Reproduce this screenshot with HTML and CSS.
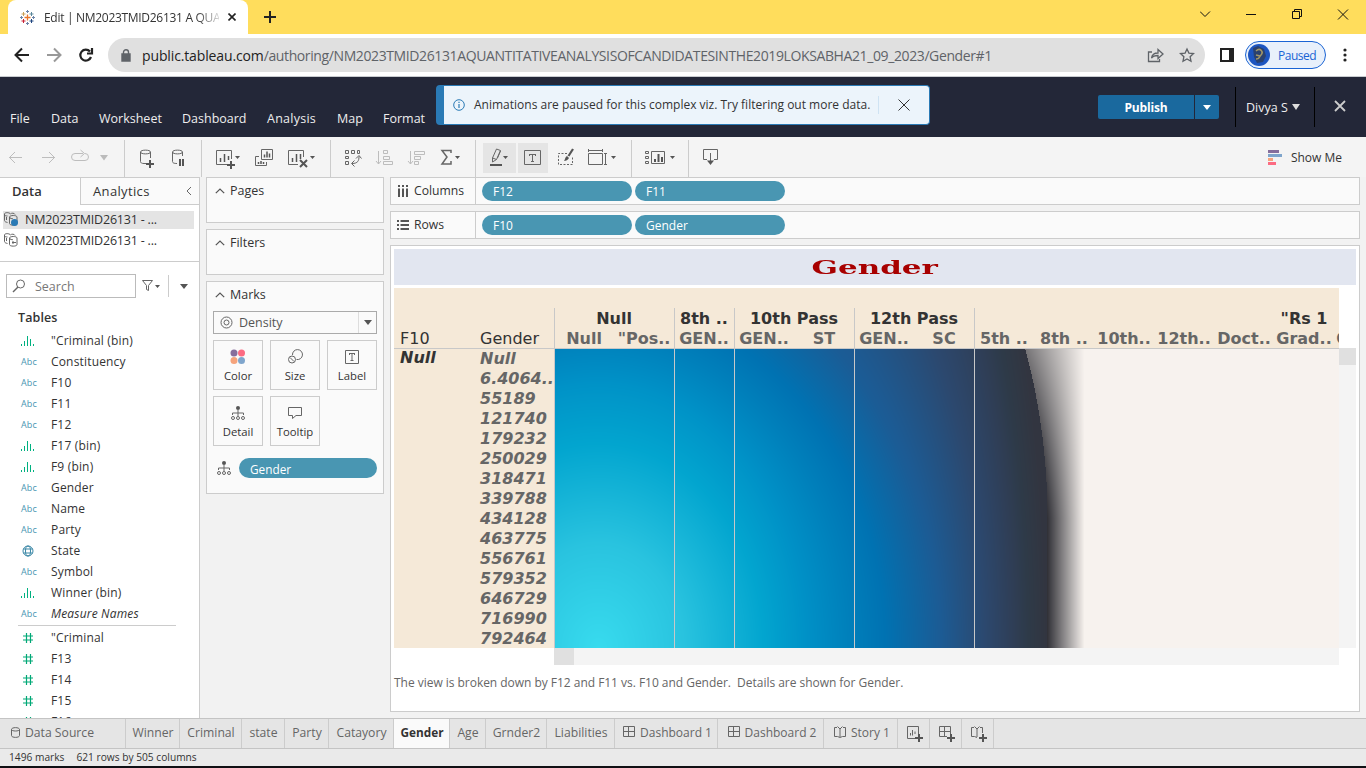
FILE: index.html
```
<!DOCTYPE html>
<html lang="en">
<head>
<meta charset="utf-8">
<title>Edit | NM2023TMID26131 A QUA</title>
<link rel="stylesheet" href="styles.css">
</head>
<body>
<svg width="0" height="0" class="defs">
  <defs>
    <symbol id="bin" viewBox="0 0 14 12"><path d="M.5 9v2M3.500 6v5M6.500 1v10M9.500 4v7M12.500 9v2" stroke="#00b180"/></symbol>
    <symbol id="hash" viewBox="0 0 12 12"><path d="M4.500 1v10M8.500 1v10M1 4h10M1 8h10" stroke="#00a876" stroke-width="1.200"/></symbol>
    <symbol id="globe" viewBox="0 0 12 12"><g fill="none" stroke="#3a87a6"><circle cx="6" cy="6" r="5"/><ellipse cx="6" cy="6" rx="2.500" ry="5"/><path d="M1.500 4h9M1.500 8h9"/></g></symbol>
    <symbol id="caret" viewBox="0 0 10 6"><path d="M.8 5.200L5 1l4.200 4.200" fill="none" stroke="#555" stroke-width="1.200"/></symbol>
    <symbol id="dash" viewBox="0 0 12 12"><path d="M.5.500h11v10H.500zM5.500.500v10M.500 5.500h11" fill="none" stroke="#666"/></symbol>
    <symbol id="book" viewBox="0 0 12 12"><path d="M3 1.500H.500v9h3L6 11.500l2.500-1h3v-9H9M3.500.500L6 3l2.500-2.500M6 3v8" fill="none" stroke="#666"/></symbol>
    <symbol id="detail" viewBox="0 0 14 14"><circle cx="7" cy="2" r="2" fill="#555"/><path d="M7 4v6M1.500 9V7h11v2" stroke="#666" fill="none"/><g fill="none" stroke="#666"><circle cx="2" cy="12" r="1.500"/><circle cx="7" cy="12" r="1.500"/><circle cx="12" cy="12" r="1.500"/></g></symbol>
    <symbol id="source" viewBox="0 0 14 14"><g fill="none" stroke="#666"><path d="M3.500 10.500C1.500 10 .500 9.500.500 8.500V2c0-1.800 5-1.800 6 0 1-1.300 4-1 4.500.500M.500 3c1 1 2 1 3 1M2.500 5v3M5.500 5v6.500c0 2.200 7.500 2.200 7.500 0V5c0-2-7.500-2-7.500 0 0 1.500 3 2 3.500 1.500M8 9.500h4M9 8v3"/></g></symbol>
  </defs>
</svg>
<div class="screen">
  <header class="tabstrip">
    <div class="browser-tab">
      <svg width="15" height="15" viewBox="0 0 15 15"><path d="M7.500 4.500v6M4.500 7.500h6" stroke="#e8762c" stroke-width="1.300"/><path d="M3.500 2v4M1.500 4h4" stroke="#c9a15b"/><path d="M11.500 2v4M9.500 4h4" stroke="#5b879b"/><path d="M3.500 9v4M1.500 11h4" stroke="#c72035"/><path d="M11.500 9v4M9.500 11h4" stroke="#1f457e"/><path d="M7.500 0v3M6 1.500h3M0 7.500h3M1.500 6v3M12 7.500h3M13.500 6v3M7.500 12v3M6 13.500h3" stroke="#6b83a8"/></svg>
      <span class="tab-title">Edit | NM2023TMID26131 A QUA</span>
      <svg class="tab-close" width="8" height="8" viewBox="0 0 8 8"><path d="M.5.500l7 7M7.500.500l-7 7" stroke="#222" stroke-width="1.600"/></svg>
    </div>
    <svg class="new-tab" width="12" height="12" viewBox="0 0 12 12"><path d="M6 0v12M0 6h12" stroke="#222" stroke-width="2"/></svg>
    <svg class="window-controls" width="166" height="34" viewBox="1200 0 166 34"><g fill="none" stroke="#111"><path d="M1200 11.500l5 5 5-5M1246 14.500h10M1292.500 11.500h7v7h-7zM1294.500 11v-1.500h7v7H1300M1338 9.500l10 10M1348 9.500l-10 10"/></g></svg>
  </header>
  <div class="addressbar">
    <svg width="108" height="42" viewBox="0 34 108 42"><g fill="none" stroke-width="2"><path d="M29 55H16M22 48.500L15.500 55l6.500 6.500" stroke="#222"/><path d="M47 55h13M54 48.500l6.500 6.500-6.500 6.500" stroke="#999"/><path d="M90 51.500A5.500 5.500 0 1 0 91 57M92 48v5.500h-5" stroke="#222" stroke-width="2.200"/></g></svg>
    <div class="omnibox">
      <svg width="10" height="13" viewBox="0 0 10 13"><path d="M1 5h8v7H1zM2.500 5V3.300a2.500 2.500 0 0 1 5 0V5" fill="none" stroke="#5f6368" stroke-width="1.400"/><path d="M1 5h8v7H1z" fill="#5f6368"/></svg>
      <span class="url"><b>public.tableau.com</b>/authoring/NM2023TMID26131AQUANTITATIVEANALYSISOFCANDIDATESINTHE2019LOKSABHA21_09_2023/Gender#1</span>
      <svg class="omni-icons" width="60" height="34" viewBox="1145 38 60 34"><path d="M1152 52h-3.500v9.500h11V59M1151.500 58c.5-3.500 3-5 6.500-5v-3.500l5 4.500-5 4.500v-3c-3 0-5 .5-6.500 2.500zM1187 49l1.900 4.100 4.600.500-3.400 3.100.900 4.500-4-2.300-4 2.300.900-4.500-3.400-3.100 4.600-.5z" fill="none" stroke="#5f6368" stroke-width="1.300"/></svg>
    </div>
    <svg class="panel-icon" width="14" height="14" viewBox="0 0 14 14"><path d="M1 1h12v12H1z" fill="#fff" stroke="#222" stroke-width="2"/><path d="M9 1h4v12H9z" fill="#222"/></svg>
    <div class="profile"><svg width="22" height="22" viewBox="0 0 22 22"><circle cx="11" cy="11" r="11" fill="#1d55c0"/><path d="M5 4l5-2 6 3 2 7-3 6-6 1-3-6z" fill="#2a416f"/><path d="M8 7c4-4 8 1 5 4s-1 4-5 4M8 11l4 1" stroke="#a19668" fill="none" stroke-width="1.500"/></svg><span>Paused</span></div>
    <svg class="dots" width="4" height="14" viewBox="0 0 4 14"><g fill="#222"><circle cx="2" cy="2" r="1.600"/><circle cx="2" cy="7" r="1.600"/><circle cx="2" cy="12" r="1.600"/></g></svg>
  </div>
  <nav class="menubar">
    <div class="menus"><span class="m1">File</span><span class="m2">Data</span><span class="m3">Worksheet</span><span class="m4">Dashboard</span><span class="m5">Analysis</span><span class="m6">Map</span><span class="m7">Format</span></div>
    <div class="toast">
      <svg width="12" height="12" viewBox="0 0 12 12"><circle cx="6" cy="6" r="5.300" fill="none" stroke="#2a7ab5"/><path d="M6 5v4M6 2.800v1.200" stroke="#2a7ab5" stroke-width="1.200"/></svg>
      <span class="toast-text">Animations are paused for this complex viz. Try filtering out more data.</span>
      <svg class="toast-close" width="12" height="12" viewBox="0 0 12 12"><path d="M.500.500l11 11M11.500.500l-11 11" stroke="#333"/></svg>
    </div>
    <button class="publish">Publish</button><button class="publish-more"><svg width="8" height="5"><path d="M0 0h8L4 5z" fill="#fff"/></svg></button>
    <div class="user"><span>Divya S</span><svg width="8" height="6"><path d="M0 0h8L4 6z" fill="#ddd"/></svg></div>
    <svg class="leave" width="12" height="12" viewBox="0 0 12 12"><path d="M1 1l10 10M11 1L1 11" stroke="#ccc" stroke-width="1.800"/></svg>
  </nav>
  <div class="toolbar">
    <div class="group g1">
      <svg width="33" height="41" viewBox="0 137 33 41"><path d="M22 157.500H9M15 152l-5.500 5.500L15 163" class="dim"/></svg>
      <svg width="33" height="41" viewBox="33 137 33 41"><path d="M42 157.500h13M49 152l5.500 5.500-5.500 5.500" class="dim"/></svg>
      <svg width="58" height="41" viewBox="66 137 58 41"><path d="M83 153.500h-8q-3.500 0-3.500 3.500t3.500 3.500h10q3.500 0 3.500-3.500 0-3.500-3.500-3.500M80.500 150l4 3.500-4 3.500" class="dim"/><path d="M100 155h8l-4 5.500z" fill="#bbb"/></svg>
    </div>
    <div class="group g2">
      <svg width="38" height="41" viewBox="125 137 38 41"><path d="M146 163.500h-2c-2.500 0-3.500-.8-3.500-2v-9.500c0-2.500 10-2.500 10 0v6M140.500 152c0 2.500 10 2.500 10 0" class="ic"/><path d="M150 160v8M146 164h8" class="bold"/></svg>
      <svg width="38" height="41" viewBox="163 137 38 41"><path d="M177 163.500c-3.500 0-4.500-.8-4.500-2v-9.500c0-2.500 10-2.500 10 0v4M172.500 152c0 2.500 10 2.500 10 0" class="ic"/><path d="M180 159v7M183 159v7" class="bold"/></svg>
    </div>
    <div class="group g3">
      <svg width="46" height="41" viewBox="202 137 46 41"><path d="M227 164.500h-10.500v-14h15V159" class="ic"/><path d="M220.500 162v-4M224.500 162v-8M228.500 160v-4" class="bar"/><path d="M231 161v8M227 165h8" class="bold"/><path d="M235 156h5l-2.500 3z" fill="#555"/></svg>
      <svg width="34" height="41" viewBox="248 137 34 41"><path d="M261.500 149.500h11v10h-11zM259 156.500h-3.500v9h11V162" class="ic"/><path d="M264.500 157.500v-3M267 157.500v-6M269.500 157.500v-4M258.500 164v-2M261 164v-3M263.500 164v-2" class="bar"/></svg>
      <svg width="48" height="41" viewBox="282 137 48 41"><path d="M298 164.500h-9.500v-14h15V157" class="ic"/><path d="M292.500 162v-4M296.500 162v-8M300.500 159v-5" class="bar"/><path d="M300 160l7 7M307 160l-7 7" class="bold"/><path d="M310 156h5l-2.500 3z" fill="#555"/></svg>
    </div>
    <div class="group g4">
      <svg width="38" height="41" viewBox="331 137 38 41"><path d="M345.500 150.500h3v3h-3zM351.500 150.500h3v3h-3zM357.500 150.500h2v3h-2zM345.500 156.500h3v2h-3zM345.500 161.500h3v3h-3zM352 163.500c6 0 7-3 7-7M356 158.500l3-3 2.500 3M354.500 160.500l-3 3 3 3" class="ic"/></svg>
      <svg width="33" height="41" viewBox="369 137 33 41"><path d="M378.500 151v13M376 161l2.500 3 2.500-3M383.500 150.500h4v3h-4zM383.500 156.500h6v3h-6zM383.500 161.500h9v3h-9z" class="dim"/></svg>
      <svg width="32" height="41" viewBox="402 137 32 41"><path d="M410.500 151v13M408 161l2.500 3 2.500-3M414.500 151.500h10v3h-10zM414.500 156.500h6v3h-6zM414.500 161.500h4v3h-4z" class="dim"/></svg>
      <svg width="41" height="41" viewBox="434 137 41 41"><path d="M451 153v-2.500h-9l5 6.500-5 7h9v-3" class="ic" stroke-width="1.500"/><path d="M455 156h5l-2.500 3z" fill="#555"/></svg>
    </div>
    <div class="group g5">
      <svg width="33" height="30" viewBox="483 143 33 30" class="active"><path d="M492.500 158l4-9 4 1.500-4 9-4 2.500zM492.500 158l4 1.500M497.500 158l3-7" class="ic"/><path d="M490 165h12" class="bold"/><path d="M503 156h5l-2.500 3z" fill="#555"/></svg>
      <svg width="30" height="30" viewBox="518 143 30 30" class="active"><path d="M524.500 150.500h16v14h-16zM529 154.500h7M532.500 154.500v7M531 161.500h3M529.500 154v2M535.500 154v2" class="ic"/></svg>
      <svg width="30" height="30" viewBox="550 143 30 30"><path d="M567 153.500h-8.500v11h14V157" class="ic" stroke-dasharray="2 1.500"/><path d="M573 149l-4.500 7" stroke="#555" stroke-width="2.200"/><path d="M564 161c1-1 1-4 3-5l2 2c-1 2-3 3-5 3z" fill="#555"/></svg>
      <svg width="40" height="30" viewBox="580 143 40 30"><path d="M588.500 153.500h14v11h-14zM588 150.500h15M588.500 149v3M602.500 149v3M605.500 154v10M604 153.500h3M604 164.500h3" class="ic"/><path d="M611 156h5l-2.500 3z" fill="#555"/></svg>
    </div>
    <div class="group g6"><svg width="50" height="41" viewBox="632 137 50 41"><path d="M645.500 151.500h3v2h-3zM645.500 156.500h3v2h-3zM645.500 161.500h3v2h-3zM651.500 151.500h13v12h-13z" class="ic"/><path d="M655 162v-3M658.500 162v-8M662 162v-5" class="bold"/><path d="M670 156h5l-2.500 3z" fill="#555"/></svg></div>
    <svg width="40" height="41" viewBox="689 137 40 41"><path d="M707 159.500h-3.500v-10h14v10H714M710.500 153v10" class="ic"/><path d="M707 160.500h7l-3.500 4.500z" fill="#555"/></svg>
    <div class="showme"><svg width="14" height="15"><path d="M0 0h11v3H0z" fill="#866e9c"/><path d="M0 4h14v3H0z" fill="#7fa5cc"/><path d="M0 8h5v3H0z" fill="#f5a37c"/><path d="M0 12h8v3H0z" fill="#fc6b82"/></svg><span>Show Me</span></div>
  </div>
  <main class="work">
    <aside class="datapane">
      <div class="pane-tabs"><div class="pane-tab on">Data</div><div class="pane-tab">Analytics<svg width="6" height="10"><path d="M5 1L1 5l4 4" class="ic"/></svg></div></div>
      <div class="sources">
        <div class="source sel"><svg width="15" height="15"><use href="#source" width="14" height="14"/><circle cx="10.500" cy="10.500" r="3.500" fill="#2a7ab5"/></svg><span>NM2023TMID26131 - ...</span></div>
        <div class="source"><svg width="15" height="15"><use href="#source" width="14" height="14"/></svg><span>NM2023TMID26131 - ...</span></div>
      </div>
      <div class="searchrow">
        <div class="search"><svg width="14" height="14" viewBox="0 0 14 14"><circle cx="8.500" cy="5" r="4" class="ic"/><path d="M6 8l-5 5" class="ic" stroke-width="1.500"/></svg><span>Search</span></div>
        <svg width="63" height="24" viewBox="136 274 63 24"><path d="M142.500 280.500h10l-4 5v5l-2-1v-4z" class="ic"/><path d="M155 285h5l-2.500 3zM180 284h8l-4 5z" fill="#555"/><path d="M168.500 275v22" stroke="#ccc"/></svg>
      </div>
      <h2 class="tables">Tables</h2>
      <ul class="fields">
        <li><svg width="14" height="12"><use href="#bin"/></svg>"Criminal (bin)</li>
        <li><i>Abc</i>Constituency</li><li><i>Abc</i>F10</li><li><i>Abc</i>F11</li><li><i>Abc</i>F12</li>
        <li><svg width="14" height="12"><use href="#bin"/></svg>F17 (bin)</li>
        <li><svg width="14" height="12"><use href="#bin"/></svg>F9 (bin)</li>
        <li><i>Abc</i>Gender</li><li><i>Abc</i>Name</li><li><i>Abc</i>Party</li>
        <li><svg width="12" height="12" class="c"><use href="#globe"/></svg>State</li>
        <li><i>Abc</i>Symbol</li>
        <li><svg width="14" height="12"><use href="#bin"/></svg>Winner (bin)</li>
        <li><i>Abc</i><em>Measure Names</em></li>
      </ul>
      <ul class="fields measures">
        <li><svg width="12" height="12" class="c"><use href="#hash"/></svg>"Criminal</li>
        <li><svg width="12" height="12" class="c"><use href="#hash"/></svg>F13</li>
        <li><svg width="12" height="12" class="c"><use href="#hash"/></svg>F14</li>
        <li><svg width="12" height="12" class="c"><use href="#hash"/></svg>F15</li>
        <li><svg width="12" height="12" class="c"><use href="#hash"/></svg>F16</li>
      </ul>
    </aside>
    <section class="cards">
      <div class="card"><h3><svg width="10" height="6"><use href="#caret"/></svg>Pages</h3></div>
      <div class="card"><h3><svg width="10" height="6"><use href="#caret"/></svg>Filters</h3></div>
      <div class="card marks"><h3><svg width="10" height="6"><use href="#caret"/></svg>Marks</h3>
        <div class="select"><svg width="13" height="13"><circle cx="6.500" cy="6.500" r="5.500" class="ic"/><circle cx="6.500" cy="6.500" r="2.500" class="ic"/></svg><span>Density</span><b><svg width="8" height="5"><path d="M0 0h8L4 5z" fill="#555"/></svg></b></div>
        <div class="buttons">
          <div><svg width="16" height="16"><circle cx="4" cy="4" r="3.500" fill="#866e9c"/><circle cx="11.500" cy="4" r="3.500" fill="#fc6b82"/><circle cx="4" cy="11.500" r="3.500" fill="#f5a37c"/><circle cx="11.500" cy="11.500" r="3.500" fill="#7fa5cc"/></svg>Color</div>
          <div><svg width="16" height="16"><path d="M5.500 6a5 5 0 1 1 4 4.500" class="ic"/><circle cx="5" cy="10.500" r="3.500" class="ic"/><path d="M3 8.500l4 4" class="ic"/></svg>Size</div>
          <div><svg width="16" height="16"><path d="M1.500 1.500h13v13h-13zM5 4.500h6M8 4.500v7M6.500 11.500h3M5.500 4v2M10.500 4v2" class="ic"/></svg>Label</div>
          <div><svg width="16" height="16"><use href="#detail" x="1" y="1" width="14" height="14"/></svg>Detail</div>
          <div><svg width="16" height="16"><path d="M1.500 2.500h13v8H9l-3.500 3v-3h-4z" class="ic"/></svg>Tooltip</div>
        </div>
        <div class="mark-pill"><svg width="14" height="14"><use href="#detail"/></svg><span class="pill">Gender</span></div>
      </div>
    </section>
    <section class="canvas">
      <div class="shelf"><label><svg width="12" height="12"><path d="M2 0v2M6 0v2M10 0v2M2 3.500V12M6 3.500V12M10 3.500V12" stroke="#555" stroke-width="2"/></svg>Columns</label><span class="pill">F12</span><span class="pill">F11</span></div>
      <div class="shelf"><label><svg width="12" height="12"><path d="M0 2h2M0 6h2M0 10h2M3.500 2H12M3.500 6H12M3.500 10H12" stroke="#555" stroke-width="1.800"/></svg>Rows</label><span class="pill">F10</span><span class="pill">Gender</span></div>
      <div class="viz">
        <h1><span>Gender</span></h1>
        <div class="plot">
          <div class="rowhead">
            <div class="corner"><span>F10</span><span>Gender</span></div>
            <div class="rows"><div class="outer">Null</div><div class="inner"><span>Null</span><span>6.4064..</span><span>55189</span><span>121740</span><span>179232</span><span>250029</span><span>318471</span><span>339788</span><span>434128</span><span>463775</span><span>556761</span><span>579352</span><span>646729</span><span>716990</span><span>792464</span></div></div>
          </div>
          <div class="grid">
            <div class="colhead">
              <div class="s2"><b>Null</b><span>Null</span><span>"Pos..</span></div>
              <div class="s1"><b>8th ..</b><span>GEN..</span></div>
              <div class="s2"><b>10th Pass</b><span>GEN..</span><span>ST</span></div>
              <div class="s2"><b>12th Pass</b><span>GEN..</span><span>SC</span></div>
              <div class="s11"><b>"Rs 1</b><span>5th ..</span><span>8th ..</span><span>10th..</span><span>12th..</span><span>Doct..</span><span>Grad..</span><span>Grad..</span></div>
            </div>
            <div class="density"><canvas id="density" width="784" height="299"></canvas><div class="lines"><i class="s2"></i><i class="s1"></i><i class="s2"></i><i class="s2"></i><i class="s11"></i></div></div>
            <div class="hscroll"><i></i></div>
          </div>
          <div class="vscroll"><i></i></div>
        </div>
        <p class="caption">The view is broken down by F12 and F11 vs. F10 and Gender.&nbsp; Details are shown for Gender.</p>
      </div>
    </section>
  </main>
  <footer class="sheets">
    <span class="t0"><svg width="9" height="11"><path d="M.500 2.500v6c0 2.500 8 2.500 8 0v-6c0-2.500-8-2.500-8 0c0 2 8 2 8 0" class="ic"/></svg>Data Source</span>
    <span class="t1">Winner</span><span class="t2">Criminal</span><span class="t3">state</span><span class="t4">Party</span><span class="t5">Catayory</span><span class="t6 on">Gender</span><span class="t7">Age</span><span class="t8">Grnder2</span><span class="t9">Liabilities</span>
    <span class="t10"><svg width="12" height="12"><use href="#dash"/></svg>Dashboard 1</span><span class="t11"><svg width="12" height="12"><use href="#dash"/></svg>Dashboard 2</span><span class="t12"><svg width="12" height="12"><use href="#book"/></svg>Story 1</span>
    <span class="add"><svg width="16" height="16"><path d="M8 12.500H.500V.500h11V8M3.500 9.500V7M5.500 9.500V4M8 8V5.500" class="ic"/><path d="M12 8v8M8 12h8" class="bold"/></svg></span>
    <span class="add"><svg width="16" height="16"><path d="M8 10.500H.500V.500h11V8M5.500.500v10M.500 5.500h11" class="ic"/><path d="M12 8v8M8 12h8" class="bold"/></svg></span>
    <span class="add"><svg width="16" height="16"><path d="M3 1.500H.500v9h3L6 11.500M3.500.500L6 3l2.500-2.500M9 1.500h2.500V7M6 3v8" class="ic"/><path d="M12 8v8M8 12h8" class="bold"/></svg></span>
  </footer>
  <div class="status"><span>1496 marks</span><span>621 rows by 505 columns</span></div>
</div>
<script src="density.js"></script>
</body>
</html>
```
FILE: styles.css
```
* { box-sizing: border-box; }
body { margin: 0; font-family: "Open Sans", "Noto Sans", sans-serif; font-size: 12.5px; color: #333; }
.defs { position: absolute; }
svg { display: block; flex: none; }
.screen { width: 1366px; height: 768px; display: flex; flex-direction: column; overflow: hidden; background: #f2f2f2; white-space: nowrap; border-bottom: 2px solid #101014; }
.ic { fill: none; stroke: #666; }
.dim { fill: none; stroke: #bdbdbd; }
.bold { fill: none; stroke: #555; stroke-width: 2; }
.bar { fill: none; stroke: #555; stroke-width: 1.5; }

.tabstrip { height: 34px; flex: none; background: #ffdd5c; display: flex; align-items: center; padding-left: 8px; }
.browser-tab { width: 240px; height: 34px; background: #fff; border-radius: 8px 8px 0 0; display: flex; align-items: center; padding: 0 12px; }
.tab-title { margin-left: 9px; width: 175px; overflow: hidden; font-size: 12px; letter-spacing: -.3px; -webkit-mask-image: linear-gradient(90deg, #000 152px, transparent 180px); }
.tab-close { margin-left: 9px; }
.new-tab { margin-left: 16px; }
.window-controls { margin-left: auto; }

.addressbar { height: 43px; flex: none; background: #fff; border-bottom: 1px solid #c9ccd0; display: flex; align-items: center; }
.omnibox { width: 1097px; height: 34px; border-radius: 17px; background: #e0e0e0; display: flex; align-items: center; padding-left: 13px; }
.url { margin-left: 11px; font-size: 14px; letter-spacing: -.39px; color: #5f6368; }
.url b { font-weight: 400; color: #222; letter-spacing: -.13px; }
.omni-icons { margin-left: auto; }
.panel-icon { margin-left: 15px; }
.profile { margin-left: 11px; width: 81px; height: 28px; border: 1px solid #1a64d4; border-radius: 14px; background: #e8f0fb; color: #1a64d4; display: flex; align-items: center; padding-left: 2px; font-size: 12px; letter-spacing: -.5px; }
.profile span { margin-left: 8px; }
.dots { margin-left: 17px; }

.menubar { height: 60px; flex: none; background: #232738; color: #eee; display: flex; position: relative; }
.menus { display: flex; padding: 33px 0 0 10px; font-size: 12.5px; }
.m1 { width: 41px; } .m2 { width: 48px; } .m3 { width: 83px; } .m4 { width: 85px; } .m5 { width: 70px; letter-spacing: .25px; } .m6 { width: 46px; } .m7 { width: 60px; }
.toast { position: absolute; left: 436px; top: 8px; width: 494px; height: 40px; border: 1px solid #2a7ab5; border-left-width: 8px; border-radius: 4px; background: #ecf4fb; color: #333; display: flex; align-items: center; padding-left: 9px; }
.toast-text { margin-left: 9px; width: 405px; height: 18px; line-height: 18px; font-size: 12px; border-right: 1px solid #cfe3f3; }
.toast-close { margin-left: 19px; }
.publish, .publish-more { border: 0; padding: 0; margin-top: 18px; height: 24px; background: #1a699e; color: #fff; font: bold 12px "Open Sans", sans-serif; }
.publish { margin-left: 655px; width: 96px; border-radius: 2px 0 0 2px; letter-spacing: -.15px; }
.publish-more { margin-left: 1px; width: 24px; border-radius: 0 2px 2px 0; display: flex; justify-content: center; align-items: center; }
.user { margin: 10px 0 0 16px; width: 80px; height: 40px; border: 1px solid #000; border-width: 0 1px; display: flex; align-items: center; padding-left: 10px; gap: 4px; }
.leave { margin: 23px 0 0 19px; }

.toolbar { height: 40px; flex: none; background: #f4f4f4; display: flex; overflow: hidden; }
.group { display: flex; flex: none; border-right: 1px solid #ccc; margin-top: 3px; height: 37px; }
.group > svg { margin-top: -3px; }
.g1 { width: 125px; } .g2 { width: 77px; } .g3 { width: 129px; } .g4 { width: 145px; } .g5 { width: 156px; padding-left: 7px; } .g6 { width: 57px; }
.g5 > svg { margin-top: 3px; margin-right: 2px; }
.g5 > svg:nth-child(3) { margin-right: 0; }
.active { background: #e5e5e5; }
.showme { margin-left: auto; padding-right: 24px; display: flex; align-items: center; gap: 9px; font-size: 12px; }

.work { height: 541px; flex: none; display: flex; }
.datapane { width: 200px; height: 541px; background: #fff; border-right: 1px solid #ccc; overflow: hidden; }
.pane-tabs { display: flex; height: 28px; }
.pane-tab { font-size: 13px; letter-spacing: .35px; width: 120px; border: 1px solid #ccc; border-right: 0; background: #fafafa; display: flex; align-items: center; justify-content: space-between; padding: 0 7px 0 12px; }
.pane-tab.on { width: 80px; background: #fff; border-left: 0; border-bottom: 0; font-weight: 600; letter-spacing: 0; padding-bottom: 2px; flex: none; }
.sources { height: 57px; border-bottom: 1px solid #ccc; padding-top: 6px; }
.source { width: 191px; height: 18px; margin: 0 0 3px 3px; display: flex; align-items: center; padding: 0 0 2px 1px; }
.source span { margin-left: 6px; font-size: 12.5px; letter-spacing: -.2px; }
.source.sel { background: #e4e4e4; }
.searchrow { display: flex; padding: 12px 0 0 6px; }
.search { width: 130px; flex: none; height: 24px; border: 1px solid #bbb; display: flex; align-items: center; padding-left: 5px; color: #777; }
.search span { margin-left: 9px; }
.tables { margin: 11px 0 3px 18px; font-size: 12.5px; line-height: 18px; font-weight: 600; letter-spacing: .1px; }
.fields { list-style: none; margin: 0; padding: 0 0 0 21px; font-size: 12px; letter-spacing: .17px; }
.fields li { height: 21px; display: flex; align-items: center; }
.fields li svg { margin-right: 16px; }
.fields li svg.c { margin: 0 17px 0 1px; }
.fields li i { width: 30px; font-style: normal; font-size: 9px; color: #4996b2; }
.measures { margin: 1px 0 0 18px; width: 158px; padding: 1px 0 0 3px; border-top: 1px solid #ccc; }

.cards { margin-left: 6px; width: 178px; display: flex; flex-direction: column; gap: 6px; }
.card { height: 46px; background: #fafafa; border: 1px solid #ccc; }
.card h3 { margin: 0; height: 25px; display: flex; align-items: center; gap: 5px; padding-left: 8px; font-size: 12.5px; font-weight: 400; }
.marks { height: 213px; padding: 0 6px; }
.card.marks h3 { padding-left: 2px; }
.select { margin-top: 4px; width: 164px; height: 23px; border: 1px solid #aaa; display: flex; align-items: center; padding-left: 6px; color: #555; }
.select span { margin-left: 6px; }
.select b { margin-left: auto; border-left: 1px solid #ddd; height: 21px; width: 18px; display: flex; align-items: center; justify-content: center; }
.buttons { margin-top: 6px; display: flex; flex-wrap: wrap; gap: 6px 7px; }
.buttons div { width: 50px; height: 50px; border: 1px solid #ccc; display: flex; flex-direction: column; align-items: center; padding-top: 8px; font-size: 11.3px; line-height: 14px; gap: 4px; }
.mark-pill { margin-top: 12px; display: flex; align-items: center; padding-left: 4px; gap: 8px; }
.pill { width: 150px; height: 20px; border-radius: 10px; background: #4996b2; color: #fff; font-size: 12px; line-height: 21px; padding-left: 11px; margin-right: 3px; }
.mark-pill .pill { width: 138px; flex: none; margin: 0; line-height: 22px; font-size: 11.8px; }

.canvas { margin-left: 6px; width: 970px; }
.shelf { height: 28px; margin-bottom: 6px; background: #fafafa; border: 1px solid #ccc; display: flex; align-items: center; }
.shelf label { width: 85px; height: 26px; border-right: 1px solid #ccc; margin-right: 6px; padding: 0 0 1px 6px; display: flex; align-items: center; gap: 5px; font-size: 12.2px; }
.viz { height: 467px; background: #fff; border: 1px solid #ccc; padding: 3px; }
.viz h1 { margin: 0 0 3px; height: 36px; background: #e2e6f0; color: #a80000; font: bold 18px/37px "DejaVu Serif", serif; text-align: center; }
.viz h1 span { display: inline-block; transform: scaleX(1.72); }
.plot { height: 377px; display: flex; font: 16px/20px "DejaVu Sans", sans-serif; }
.rowhead { width: 160px; height: 360px; background: #f5e9d8; overflow: hidden; }
.corner { height: 61px; border-bottom: 1px solid #c8c8c8; display: flex; padding: 41px 0 0 6px; }
.corner span { width: 80px; flex: none; }
.rows { display: flex; font-weight: bold; font-style: italic; padding-left: 6px; }
.outer { width: 80px; margin-top: -1px; }
.inner { display: flex; flex-direction: column; color: #666; }
.grid { width: 785px; }
.colhead { height: 61px; width: 785px; background: #f5e9d8; border-bottom: 1px solid #c8c8c8; padding-top: 20px; display: flex; overflow: hidden; }
.colhead div { box-shadow: inset 1px 0 #c8c8c8; display: flex; flex-wrap: wrap; flex: none; text-align: center; align-content: flex-start; height: 40px; padding-top: 1px; }
.colhead b { width: 100%; height: 20px; }
.colhead span { width: 60px; color: #666; font-weight: bold; }
.s1 { width: 60px; } .s2 { width: 120px; } .colhead .s11, .s11 { width: 660px; }
.density { height: 299px; width: 785px; background: #f7f2ee; padding-left: 1px; position: relative; }
.density canvas { display: block; }
.lines { position: absolute; inset: 0; display: flex; overflow: hidden; }
.lines i { border-left: 1px solid #c8c8c8; flex: none; }
.hscroll { height: 17px; background: #f4f4f4; }
.hscroll i { display: block; width: 20px; height: 17px; background: #e0e0e0; }
.vscroll { margin-top: 60px; width: 17px; height: 300px; background: #f4f4f4; }
.vscroll i { display: block; height: 17px; background: #e0e0e0; }
.caption { margin: 9px 0 0; font-size: 12px; line-height: 18px; letter-spacing: -.03px; color: #666; }

.sheets { height: 31px; flex: none; background: #e5e5e5; border: 1px solid #c4c4c4; border-width: 1px 0; display: flex; color: #666; font-size: 12.2px; }
.sheets span { border-right: 1px solid #ccc; display: flex; align-items: center; justify-content: center; gap: 5px; flex: none; height: 29px; padding: 0 0 3px 1px; }
.sheets .on { background: #fafafa; color: #333; font-weight: bold; font-size: 11.8px; }
.sheets .t0 { width: 126px; padding-right: 21px; } .t1 { width: 54px; } .t2 { width: 62px; } .t3 { width: 43px; } .t4 { width: 44px; } .t5 { width: 65px; } .t6 { width: 56px; } .t7 { width: 36px; } .t8 { width: 61px; } .t9 { width: 68px; } .t10 { width: 103px; } .t11 { width: 106px; } .t12 { width: 74px; } .sheets .add { width: 32px; padding-left: 3px; padding-bottom: 0; }
.sheets .t10, .sheets .t11, .sheets .t12 { font-size: 12px; padding-left: 3px; }
.status { height: 17px; flex: none; background: #eaeaea; padding-left: 9px; display: flex; gap: 12px; font-size: 10.2px; line-height: 16px; }
```
FILE: density.js
```
// Density surface: each contour is a half-ellipse whose height grows faster than its width.
const heights = [[0, 0], [165, 205], [205, 265], [285, 345], [340, 419], [385, 606], [447, 965], [600, 1900]];
const colors = [[0, [56, 219, 238]], [85, [41, 195, 223]], [165, [2, 165, 207]], [210, [0, 144, 198]], [250, [0, 128, 187]], [287, [0, 114, 178]], [343, [28, 91, 148]], [387, [44, 72, 110]], [415, [47, 62, 86]], [430, [46, 58, 72]], [448, [50, 53, 64]]];
const at = (table, x) => {
  let i = 1;
  while (i < table.length - 1 && table[i][0] < x) i++;
  const [x0, a] = table[i - 1], [x1, b] = table[i];
  const t = Math.min(1, (x - x0) / (x1 - x0));
  return Array.isArray(a) ? a.map((v, k) => v + (b[k] - v) * t) : a + (b - a) * t;
};
const cv = document.getElementById('density');
const ctx = cv.getContext('2d');
const img = ctx.createImageData(cv.width, cv.height);
const cx = 43, cy = 299, bg = [247, 242, 238];
for (let y = 0; y < cv.height; y++) {
  const dy = cy - y;
  const bend = Math.max(0, dy - 130) / 545;
  const edge = cx + 449 * Math.sqrt(1 - bend * bend);
  for (let x = 0; x < cv.width; x++) {
    let c = bg;
    if (x < edge) {
      const dx = Math.abs(x - cx);
      let lo = 0, hi = 600;
      for (let k = 0; k < 14; k++) {
        const a = (lo + hi) / 2, b = at(heights, a);
        if ((dx / a) ** 2 + (dy / b) ** 2 > 1) lo = a; else hi = a;
      }
      c = at(colors, lo);
    } else if (x < 529) {
      const start = 1 - 0.35 * Math.max(0, dy - 130) / 170;
      const f = start * (1 - (x - edge) / (529 - edge));
      c = bg.map((v, k) => v + ([50, 50, 56][k] - v) * f);
    }
    const p = (y * cv.width + x) * 4;
    img.data[p] = c[0]; img.data[p + 1] = c[1]; img.data[p + 2] = c[2]; img.data[p + 3] = 255;
  }
}
ctx.putImageData(img, 0, 0);
```
